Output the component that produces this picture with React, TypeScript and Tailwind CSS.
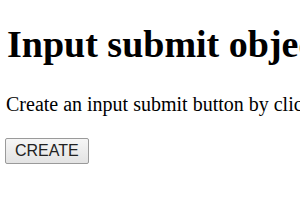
export default function App() {
  return (
    <div className="flex flex-col items-start whitespace-nowrap px-1.5 pt-[22px] font-['Liberation_Serif',serif] text-black">
      <h1 className="ml-px text-[38px] font-bold leading-[44px]">Input submit object</h1>
      <p className="mt-[27px] text-[20px] leading-[23px]">Create an input submit button by clicking the button below.</p>
      <button className="-ml-px mt-[22px] rounded-[2px] border border-[#9a9a9a] bg-gradient-to-b from-[#f6f6f6] to-[#e3e3e3] px-[9px] py-[3px] font-['Liberation_Sans',sans-serif] text-[16px] leading-[18px] text-[#222]">
        CREATE
      </button>
    </div>
  );
}
